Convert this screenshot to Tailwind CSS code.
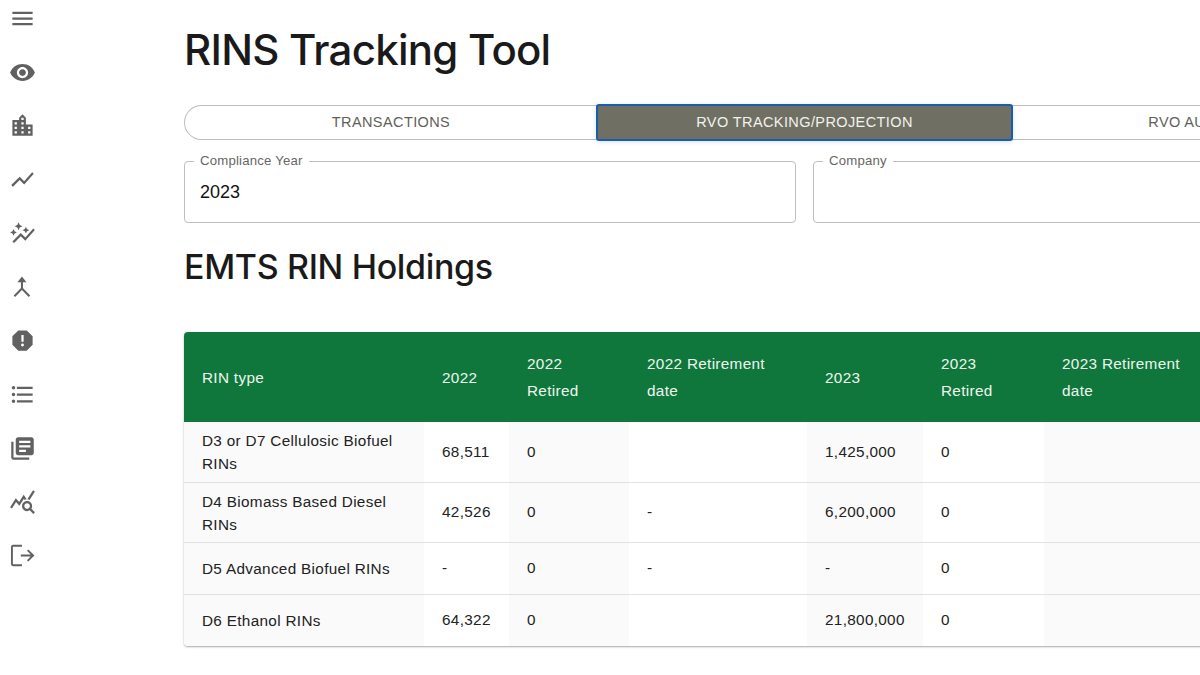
<!DOCTYPE html>
<html>
<head>
<meta charset="utf-8">
<script src="https://cdn.jsdelivr.net/npm/@tailwindcss/browser@4"></script>
</head>
<body class="bg-white overflow-hidden font-['Liberation_Sans',sans-serif]">
<div class="flex w-[1200px] h-[675px] overflow-hidden">
  <nav class="w-[184px] shrink-0 pl-[9px] pt-[5px] flex flex-col gap-[26.7px] text-[#616161]">
    <svg class="w-[27px] h-[27px] fill-current" viewBox="0 0 24 24"><path d="M3 18h18v-2H3v2zm0-5h18v-2H3v2zm0-7v2h18V6H3z"/></svg>
    <svg class="w-[27px] h-[27px] fill-current" viewBox="0 0 24 24"><path d="M12 4.5C7 4.5 2.73 7.61 1 12c1.73 4.39 6 7.5 11 7.5s9.27-3.11 11-7.5c-1.73-4.39-6-7.5-11-7.5zM12 17c-2.76 0-5-2.24-5-5s2.24-5 5-5 5 2.24 5 5-2.24 5-5 5zm0-8c-1.66 0-3 1.34-3 3s1.34 3 3 3 3-1.34 3-3-1.34-3-3-3z"/></svg>
    <svg class="w-[27px] h-[27px] fill-current" viewBox="0 0 24 24"><path d="M15 11V5l-3-3-3 3v2H3v14h18V11h-6zm-8 8H5v-2h2v2zm0-4H5v-2h2v2zm0-4H5V9h2v2zm6 8h-2v-2h2v2zm0-4h-2v-2h2v2zm0-4h-2V9h2v2zm0-4h-2V5h2v2zm6 12h-2v-2h2v2zm0-4h-2v-2h2v2z"/></svg>
    <svg class="w-[27px] h-[27px] fill-current" viewBox="0 0 24 24"><path d="M3.5 18.49l6-6.01 4 4L22 6.92l-1.41-1.41-7.09 7.97-4-4L2 16.99z"/></svg>
    <svg class="w-[27px] h-[27px] fill-current" viewBox="0 0 24 24"><path d="M14.06 9.94 12 9l2.06-.94L15 6l.94 2.06L18 9l-2.06.94L15 12l-.94-2.06zM4 14l.94-2.06L7 11l-2.06-.94L4 8l-.94 2.06L1 11l2.06.94L4 14zm4.5-5 1.09-2.41L12 5.5 9.59 4.41 8.5 2 7.41 4.41 5 5.5l2.41 1.09L8.5 9zm-4 11.5 6-6.01 4 4L23 8.93l-1.41-1.41-7.09 7.97-4-4L3 19l1.5 1.5z"/></svg>
    <svg class="w-[27px] h-[27px] text-[#616161]" viewBox="0 0 24 24"><path class="fill-none stroke-current stroke-[1.8]" d="M11.5 6v8M11.5 13.8 4.8 20.6M11.5 13.8l6.7 6.8"/><path class="fill-current" d="M7.5 8.2 11.5 3l4 5.2z"/></svg>
    <svg class="w-[27px] h-[27px] fill-current" viewBox="0 0 24 24"><path d="M15.73 3H8.27L3 8.27v7.46L8.27 21h7.46L21 15.73V8.27L15.73 3zM12 17.3c-.72 0-1.3-.58-1.3-1.3 0-.72.58-1.3 1.3-1.3.72 0 1.3.58 1.3 1.3 0 .72-.58 1.3-1.3 1.3zm1-4.3h-2V7h2v6z"/></svg>
    <svg class="w-[27px] h-[27px] fill-current" viewBox="0 0 24 24"><path d="M4 10.5c-.83 0-1.5.67-1.5 1.5s.67 1.5 1.5 1.5 1.5-.67 1.5-1.5-.67-1.5-1.5-1.5zm0-6c-.83 0-1.5.67-1.5 1.5S3.17 7.5 4 7.5 5.5 6.83 5.5 6 4.83 4.5 4 4.5zm0 12c-.83 0-1.5.68-1.5 1.5s.68 1.5 1.5 1.5 1.5-.68 1.5-1.5-.67-1.5-1.5-1.5zM7 19h14v-2H7v2zm0-6h14v-2H7v2zm0-8v2h14V5H7z"/></svg>
    <svg class="w-[27px] h-[27px] fill-current" viewBox="0 0 24 24"><path d="M4 6H2v14c0 1.1.9 2 2 2h14v-2H4V6zm16-4H8c-1.1 0-2 .9-2 2v12c0 1.1.9 2 2 2h12c1.1 0 2-.9 2-2V4c0-1.1-.9-2-2-2zm-1 9H9V9h10v2zm-4 4H9v-2h6v2zm4-8H9V5h10v2z"/></svg>
    <svg class="w-[27px] h-[27px] fill-current" viewBox="0 0 24 24"><path d="M19.88 18.47c.44-.7.7-1.51.7-2.39 0-2.49-2.01-4.5-4.5-4.5s-4.5 2.01-4.5 4.5 2.01 4.5 4.49 4.5c.88 0 1.7-.26 2.39-.7L21.58 23 23 21.58l-3.12-3.11zm-3.8.11c-1.38 0-2.5-1.12-2.5-2.5s1.12-2.5 2.5-2.5 2.5 1.12 2.5 2.5-1.12 2.5-2.5 2.5zm-.36-8.5c-.74.02-1.45.18-2.1.45l-.55-.83-3.8 6.18-3.01-3.52-3.63 5.81L1 17l5-8 3 3.5L13 6l2.72 4.08zm2.59.5c-.64-.28-1.33-.45-2.05-.49L21.38 2 23 3.18l-4.69 7.4z"/></svg>
    <svg class="w-[27px] h-[27px] fill-none stroke-current stroke-[1.7]" viewBox="0 0 24 24"><path d="M11.5 3.4H3.6a1 1 0 0 0-1 1v15.2a1 1 0 0 0 1 1h7.9M10.5 12h10.8M16.6 7.2 21.4 12l-4.8 4.8"/></svg>
  </nav>
  <main class="w-[1016px] shrink-0 pt-[22px] text-[#1a1a1a]">
    <h1 class="font-['Inter',sans-serif] text-[42px] leading-[56px] h-[56px] font-[450] tracking-[-0.75px] text-[#1a1a1a]">RINS Tracking Tool</h1>
    <div class="flex items-center mt-[25px] h-[38px] text-[14.5px] tracking-[0.4px] w-[1255px]">
      <div class="w-[413px] shrink-0 h-[35px] -mr-px pt-px flex items-center justify-center rounded-l-[18px] border border-r-0 border-[#bdbdbd] text-[#5f5f5a]">TRANSACTIONS</div>
      <div class="relative z-10 w-[417px] shrink-0 h-[37px] pt-px flex items-center justify-center rounded-[3px] border-2 border-[#1c5cab] bg-[#6f7063] text-[#f2f2ee] shadow-[0_1px_4px_rgba(100,170,230,0.3)]">RVO TRACKING/PROJECTION</div>
      <div class="w-[425px] shrink-0 h-[35px] -ml-px pt-px flex items-center justify-center border border-[#bdbdbd] text-[#5f5f5a]">RVO AUDIT HISTORY</div>
    </div>
    <div class="flex gap-[17px] mt-[20px] w-[1241px]">
      <div class="relative w-[612px] shrink-0 h-[62px] rounded-[4px] border border-[#bfbfbf] pl-[15px] flex items-center">
        <span class="absolute left-[9px] -top-[9px] bg-white px-[6px] text-[13.2px] leading-[16px] tracking-[0.2px] text-[#666]">Compliance Year</span>
        <span class="text-[18px] text-[#111]">2023</span>
      </div>
      <div class="relative w-[612px] shrink-0 h-[62px] rounded-[4px] border border-[#bfbfbf] pl-[15px] flex items-center">
        <span class="absolute left-[9px] -top-[9px] bg-white px-[6px] text-[13.2px] leading-[16px] tracking-[0.2px] text-[#666]">Company</span>
      </div>
    </div>
    <h2 class="font-['Inter',sans-serif] text-[34px] leading-[44px] mt-[22px] font-[450] tracking-[-0.35px] text-[#1a1a1a]">EMTS RIN Holdings</h2>
    <div class="mt-[43px] w-[1020px] rounded-l-[4px] overflow-hidden shadow-[0_1px_2px_rgba(0,0,0,0.35)]">
      <table class="w-full table-fixed border-collapse text-[15.3px] tracking-[0.32px] text-[#222] [&_td]:pt-px">
        <colgroup>
          <col class="w-[240px]"><col class="w-[85px]"><col class="w-[120px]"><col class="w-[178px]"><col class="w-[116px]"><col class="w-[121px]"><col>
        </colgroup>
        <thead class="bg-[#10773c] text-[#eef5ef] text-left">
          <tr class="h-[90px]">
            <th class="font-normal pl-[18px] pr-[18px] leading-[27px]">RIN type</th>
            <th class="font-normal pl-[18px] pr-2 leading-[27px]">2022</th>
            <th class="font-normal pl-[18px] pr-[18px] leading-[27px]">2022 Retired</th>
            <th class="font-normal pl-[18px] pr-[18px] leading-[27px]">2022 Retirement date</th>
            <th class="font-normal pl-[18px] pr-2 leading-[27px]">2023</th>
            <th class="font-normal pl-[18px] pr-[18px] leading-[27px]">2023 Retired</th>
            <th class="font-normal pl-[18px] pr-[18px] leading-[27px]">2023 Retirement date</th>
          </tr>
        </thead>
        <tbody>
          <tr class="h-[60px] border-b border-[#e2e2e2]">
            <td class="bg-[#fafafa] pl-[18px] pr-[18px] leading-[23px]">D3 or D7 Cellulosic Biofuel RINs</td>
            <td class="pl-[18px]">68,511</td>
            <td class="bg-[#fafafa] pl-[18px]">0</td>
            <td class="pl-[18px]"></td>
            <td class="bg-[#fafafa] pl-[18px]">1,425,000</td>
            <td class="pl-[18px]">0</td>
            <td class="bg-[#fafafa] pl-[18px]"></td>
          </tr>
          <tr class="h-[60px] border-b border-[#e2e2e2]">
            <td class="bg-[#fafafa] pl-[18px] pr-[18px] leading-[23px]">D4 Biomass Based Diesel RINs</td>
            <td class="pl-[18px]">42,526</td>
            <td class="bg-[#fafafa] pl-[18px]">0</td>
            <td class="pl-[18px]">-</td>
            <td class="bg-[#fafafa] pl-[18px]">6,200,000</td>
            <td class="pl-[18px]">0</td>
            <td class="bg-[#fafafa] pl-[18px]"></td>
          </tr>
          <tr class="h-[52px] border-b border-[#e2e2e2]">
            <td class="bg-[#fafafa] pl-[18px] pr-[18px] leading-[23px]">D5 Advanced Biofuel RINs</td>
            <td class="pl-[18px]">-</td>
            <td class="bg-[#fafafa] pl-[18px]">0</td>
            <td class="pl-[18px]">-</td>
            <td class="bg-[#fafafa] pl-[18px]">-</td>
            <td class="pl-[18px]">0</td>
            <td class="bg-[#fafafa] pl-[18px]"></td>
          </tr>
          <tr class="h-[52px]">
            <td class="bg-[#fafafa] pl-[18px] pr-[18px] leading-[23px]">D6 Ethanol RINs</td>
            <td class="pl-[18px]">64,322</td>
            <td class="bg-[#fafafa] pl-[18px]">0</td>
            <td class="pl-[18px]"></td>
            <td class="bg-[#fafafa] pl-[18px]">21,800,000</td>
            <td class="pl-[18px]">0</td>
            <td class="bg-[#fafafa] pl-[18px]"></td>
          </tr>
        </tbody>
      </table>
    </div>
  </main>
</div>
</body>
</html>
